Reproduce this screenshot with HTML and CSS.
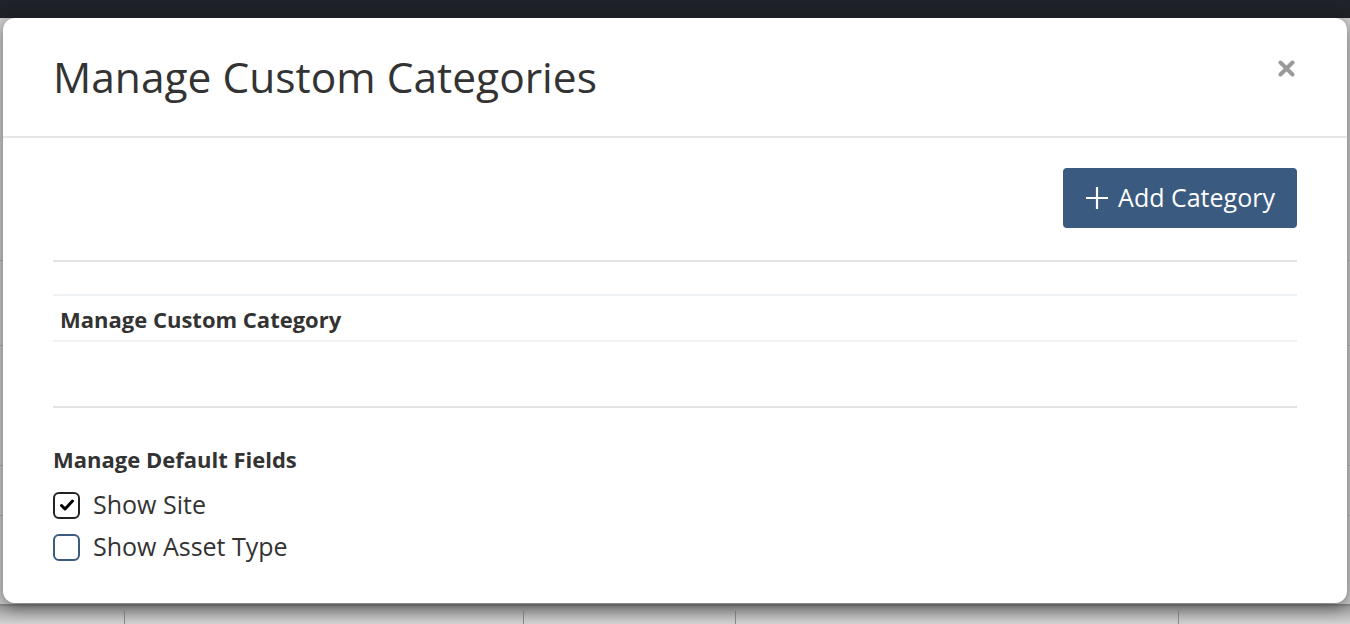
FILE: index.html
```html
<!DOCTYPE html>
<html>
<head>
<meta charset="utf-8">
<link rel="stylesheet" href="styles.css">
</head>
<body>
<div class="page">
  <div class="navbar"></div>
  <div class="backdrop">
    <div class="bg-row r1"></div>
    <div class="bg-row r2"></div>
    <div class="bg-row r3"></div>
    <div class="bg-row r4"></div>
    <div class="bg-bottom">
      <span class="col c1"></span>
      <span class="col c2"></span>
      <span class="col c3"></span>
      <span class="col c4"></span>
    </div>
  </div>
</div>

<div class="modal">
  <div class="modal-header">
    <h2 class="modal-title">Manage Custom Categories</h2>
    <button class="close" aria-label="Close">
      <svg width="17" height="17" viewBox="0 0 17 17"><path d="M2.5 2.5 L14.5 14.5 M14.5 2.5 L2.5 14.5" stroke="#9a9a9a" stroke-width="4" stroke-linecap="round"/></svg>
    </button>
  </div>
  <div class="modal-body">
    <div class="toolbar">
      <button class="btn-primary">
        <svg class="plus" width="24" height="24" viewBox="0 0 24 24"><path d="M12 1 V23 M1 12 H23" stroke="#fff" stroke-width="2.2"/></svg>
        <span>Add Category</span>
      </button>
    </div>
    <div class="divider"></div>
    <table class="cat-table">
      <thead>
        <tr><th>Manage Custom Category</th></tr>
      </thead>
    </table>
    <div class="divider second"></div>
    <h4 class="section-title">Manage Default Fields</h4>
    <label class="check">
      <span class="box checked">
        <svg width="18" height="18" viewBox="0 0 18 18"><path d="M3.5 9.5 L7 13 L14.5 5" fill="none" stroke="#000" stroke-width="3" stroke-linecap="round" stroke-linejoin="round"/></svg>
      </span>
      <span>Show Site</span>
    </label>
    <label class="check">
      <span class="box"></span>
      <span>Show Asset Type</span>
    </label>
  </div>
</div>
</body>
</html>
```

FILE: styles.css
```css
html, body {
  margin: 0;
  padding: 0;
}
body {
  width: 1350px;
  height: 624px;
  overflow: hidden;
  font-family: "Open Sans", "Noto Sans", sans-serif;
  color: #333;
  background: #d6d6d6;
  position: relative;
}
.page {
  display: flex;
  flex-direction: column;
  height: 624px;
}
.navbar {
  height: 18px;
  background: #1f2329;
  flex: none;
}
.backdrop {
  flex: 1;
  position: relative;
  background: #d0d0d0;
}
.bg-row {
  position: absolute;
  left: 0;
  right: 0;
  height: 1px;
  background: #b8b8b8;
}
.r1 { top: 242px; }
.r2 { top: 327px; }
.r3 { top: 447px; }
.r4 { top: 497px; }
.bg-bottom {
  position: absolute;
  left: 0;
  right: 0;
  top: 586px;
  height: 20px;
  border-top: 2px solid #8e8e8e;
  background: linear-gradient(#a0a0a0, #d8d8d8);
}
.col {
  position: absolute;
  top: 5px;
  bottom: 0;
  width: 1px;
  background: #8a8a8a;
}
.c1 { left: 124px; }
.c2 { left: 523px; }
.c3 { left: 735px; }
.c4 { left: 1178px; }

.modal {
  position: absolute;
  left: 3px;
  top: 18px;
  width: 1344px;
  height: 585px;
  background: #fff;
  border-radius: 12px;
  box-shadow: 0 4px 16px rgba(0, 0, 0, 0.5);
  box-sizing: border-box;
}
.modal-header {
  height: 118px;
  border-bottom: 2px solid #e6e6e6;
  display: flex;
  align-items: center;
  justify-content: space-between;
  padding: 0 50px 0 50px;
}
.modal-title {
  margin: 0;
  font-size: 42.5px;
  font-weight: 400;
  color: #333;
  letter-spacing: 0;
  margin-bottom: 2px;
}
.close {
  border: 0;
  background: none;
  padding: 0;
  width: 17px;
  height: 17px;
  margin-right: 2px;
  margin-bottom: 18px;
  display: block;
}
.close svg { display: block; }

.modal-body {
  padding: 30px 50px 0 50px;
}
.toolbar {
  display: flex;
  justify-content: flex-end;
}
.btn-primary {
  height: 60px;
  width: 234px;
  background: #3a5a80;
  border: 0;
  border-radius: 4px;
  color: #fff;
  font-family: "Open Sans", "Noto Sans", sans-serif;
  font-size: 25px;
  display: flex;
  align-items: center;
  justify-content: center;
  gap: 9px;
  padding: 0 0 2px 0;
}
.plus { display: block; flex: none; margin-top: 2px; }
.divider {
  height: 2px;
  background: #e3e3e3;
  margin-top: 32px;
}
.cat-table {
  width: 100%;
  border-collapse: collapse;
  margin-top: 32px;
}
.cat-table th {
  text-align: left;
  font-size: 22px;
  font-weight: 700;
  color: #333;
  height: 42px;
  padding: 2px 0 0 7px;
  border-top: 2px solid #eef2f5;
  border-bottom: 2px solid #eef2f5;
}
.divider.second {
  margin-top: 64px;
}
.section-title {
  margin: 35px 0 0 0;
  font-size: 22px;
  font-weight: 700;
  color: #333;
  line-height: 32px;
}
.check {
  display: flex;
  align-items: center;
  gap: 13px;
  font-size: 25px;
  color: #333;
  height: 42px;
}
.check:first-of-type { margin-top: 8px; }
.box {
  width: 27px;
  height: 27px;
  box-sizing: border-box;
  border: 2px solid #3a5a80;
  border-radius: 6px;
  display: flex;
  align-items: center;
  justify-content: center;
  flex: none;
  background: #fff;
  margin-top: 2px;
}
.box.checked {
  border-color: #222;
}
.box svg { display: block; }
```
